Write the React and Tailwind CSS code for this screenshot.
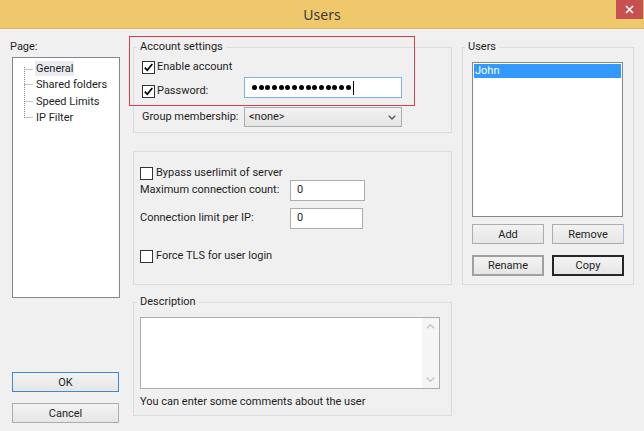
import React from "react";

function Check({ checked }) {
  return (
    <span className="flex h-[13px] w-[13px] shrink-0 items-center justify-center border border-[#333] bg-white">
      {checked && (
        <svg width="11" height="11" viewBox="0 0 11 11">
          <path d="M1.8 5.6 L4.3 8.3 L9.3 2" fill="none" stroke="#000" strokeWidth="1.7" />
        </svg>
      )}
    </span>
  );
}

function Group({ label, className, children, legendLeft = "left-[3px]" }) {
  return (
    <div className={`relative border border-[#dcdcdc] ${className}`}>
      <span className={`absolute -top-[8px] ${legendLeft} bg-[#f0f0f0] px-[3px] leading-[14px]`}>{label}</span>
      {children}
    </div>
  );
}

function Btn({ children, className = "" }) {
  return (
    <div
      className={`flex items-center justify-center bg-linear-to-b from-[#f3f3f3] to-[#e6e6e6] leading-none ${className}`}
    >
      {children}
    </div>
  );
}

function Field({ value, className = "" }) {
  return (
    <div className={`flex items-center border border-[#abadb3] bg-white pl-[6px] ${className}`}>{value}</div>
  );
}

const tree = ["General", "Shared folders", "Speed Limits", "IP Filter"];

export default function App() {
  return (
    <div className="flex h-[431px] w-[644px] flex-col overflow-hidden whitespace-nowrap bg-[#f0f0f0] font-['Roboto',sans-serif] text-[11px] text-[#1e1e1e]">
      <div className="relative flex h-[29px] shrink-0 items-center justify-center border-b border-[#d8b55e] bg-[#efc86b] font-['Noto_Sans',sans-serif] text-[14px] text-[#3a3a3a]">
        Users
        <div className="absolute right-[1px] top-0 flex h-[19px] w-[27px] items-center justify-center bg-[#c75050]">
          <svg width="9" height="9" viewBox="0 0 9 9">
            <path d="M1 1 L8 8 M8 1 L1 8" stroke="#fff" strokeWidth="1.6" />
          </svg>
        </div>
      </div>

      <div className="flex flex-1 pl-[10px] pt-[11px]">
        {/* left column */}
        <div className="flex w-[110px] flex-col pb-[8px]">
          <div className="h-[14px] leading-[14px]">Page:</div>
          <div className="relative ml-[2px] mt-[3px] h-[241px] w-[108px] border border-[#828790] bg-white pt-[2px]">
            <svg className="absolute left-0 top-0" width="40" height="80">
              <path
                d="M11.5 9 V61 M11.5 11.5 H20 M11.5 26.5 H20 M11.5 43.5 H20 M11.5 59.5 H20"
                stroke="#8a8a8a"
                strokeWidth="1"
                strokeDasharray="1 1"
                fill="none"
              />
            </svg>
            {tree.map((t, i) => (
              <div key={t} className={`flex h-[16px] items-center pl-[22px] ${i === 2 ? "mt-px" : ""}`}>
                <span className={`px-px leading-[15px] ${i === 0 ? "bg-[#e8ecf1]" : ""}`}>{t}</span>
              </div>
            ))}
          </div>
          <div className="flex-1" />
          <Btn className="ml-[2px] h-[20px] w-[107px] border border-[#3c8bd0]">OK</Btn>
          <Btn className="ml-[2px] mt-[11px] h-[20px] w-[107px] border border-[#acacac]">Cancel</Btn>
        </div>

        {/* middle column */}
        <div className="relative ml-[13px] flex w-[319px] flex-col">
          <Group label="Account settings" className="mt-[7px] h-[86px] pl-[8px] pt-[13px]">
            <div className="flex h-[13px] items-center gap-[2px]">
              <Check checked />
              <span>Enable account</span>
            </div>
            <div className="mt-[3px] flex items-start">
              <div className="mt-[8px] flex h-[13px] w-[102px] items-center gap-[2px]">
                <Check checked />
                <span>Password:</span>
              </div>
              <div className="flex h-[21px] w-[158px] items-center border border-[#7eb4ea] bg-white pl-[7px]">
                <div className="flex gap-[1.7px]">
                  {Array.from({ length: 15 }).map((_, i) => (
                    <span key={i} className="h-[5px] w-[5px] rounded-full bg-black" />
                  ))}
                </div>
                <span className="ml-[2px] h-[14px] w-px bg-black" />
              </div>
            </div>
            <div className="mt-[9px] flex items-center">
              <span className="w-[102px]">Group membership:</span>
              <div className="flex h-[20px] w-[158px] items-center justify-between border border-[#acacac] bg-linear-to-b from-[#f2f2f2] to-[#e5e5e5] pl-[4px] pr-[5px]">
                <span>&lt;none&gt;</span>
                <svg width="8" height="5" viewBox="0 0 8 5">
                  <path d="M0.8 0.8 L4 4 L7.2 0.8" fill="none" stroke="#555" strokeWidth="1.4" />
                </svg>
              </div>
            </div>
          </Group>

          <div className="mt-[18px] h-[134px] border border-[#dcdcdc] pl-[6px] pt-[15px]">
            <div className="flex h-[13px] items-center gap-[3px]">
              <Check />
              <span>Bypass userlimit of server</span>
            </div>
            <div className="flex items-center">
              <span className="w-[150px]">Maximum connection count:</span>
              <Field value="0" className="h-[21px] w-[75px]" />
            </div>
            <div className="mt-[7px] flex items-center">
              <span className="w-[150px]">Connection limit per IP:</span>
              <Field value="0" className="h-[21px] w-[73px]" />
            </div>
            <div className="mt-[21px] flex h-[13px] items-center gap-[3px]">
              <Check />
              <span>Force TLS for user login</span>
            </div>
          </div>

          <Group label="Description" className="mt-[17px] h-[114px] pl-[6px] pt-[14px]">
            <div className="flex h-[72px] w-[300px] justify-end border border-[#abadb3] bg-white">
              <div className="flex w-[17px] flex-col items-center justify-between bg-[#f5f5f5] py-[6px]">
                <svg width="9" height="5" viewBox="0 0 9 5">
                  <path d="M0.8 4.3 L4.5 0.8 L8.2 4.3" fill="none" stroke="#c2c2c2" strokeWidth="1.3" />
                </svg>
                <svg width="9" height="5" viewBox="0 0 9 5">
                  <path d="M0.8 0.7 L4.5 4.2 L8.2 0.7" fill="none" stroke="#c2c2c2" strokeWidth="1.3" />
                </svg>
              </div>
            </div>
            <div className="mt-[6px] leading-[14px]">You can enter some comments about the user</div>
          </Group>

          <div className="pointer-events-none absolute -left-[4px] -top-[4px] h-[70px] w-[286px] border border-[#d5404c]" />
        </div>

        {/* right column */}
        <div className="ml-[10px] flex w-[172px] flex-col">
          <Group label="Users" legendLeft="left-[2px]" className="mt-[7px] h-[238px] pl-[9px] pt-[14px]">
            <div className="h-[155px] w-[151px] border border-[#828790] bg-white p-px">
              <div className="h-[14px] bg-[#3399ff] pl-px leading-[14px] text-white">John</div>
            </div>
            <div className="mt-[7px] flex gap-[8px]">
              <Btn className="h-[20px] w-[72px] border border-[#acacac]">Add</Btn>
              <Btn className="h-[20px] w-[72px] border border-[#acacac] border-r-[#9ec3e6]">Remove</Btn>
            </div>
            <div className="mt-[11px] flex gap-[8px]">
              <Btn className="h-[21px] w-[72px] border-2 border-[#a0a0a0]">Rename</Btn>
              <Btn className="h-[21px] w-[72px] border-2 border-[#262626]">Copy</Btn>
            </div>
          </Group>
        </div>
      </div>
    </div>
  );
}
